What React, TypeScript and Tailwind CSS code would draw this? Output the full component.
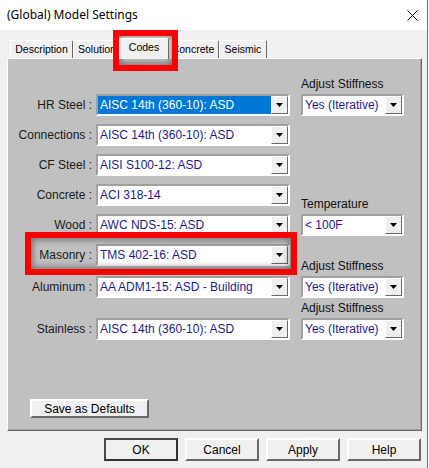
import React from "react";

function Arrow() {
  return (
    <svg width="7" height="4" viewBox="0 0 7 4">
      <polygon points="0,0 7,0 3.5,4" fill="#000" />
    </svg>
  );
}

function Combo({ text, w, selected }: { text: string; w: string; selected?: boolean }) {
  return (
    <div
      className={`flex h-[22px] ${w} border-2 border-t-[#a0a0a0] border-l-[#a0a0a0] border-b-white border-r-white bg-white`}
    >
      <div
        className={`flex-1 flex items-center pl-[2px] text-[12px] leading-none whitespace-nowrap overflow-hidden ${
          selected ? "bg-[#0078d7] text-white" : "text-[#1b1b8e]"
        }`}
      >
        {text}
      </div>
      <div className="w-[17px] h-full bg-[#f0f0f0] border border-t-white border-l-white border-r-[#696969] border-b-[#696969] flex items-center justify-center">
        <Arrow />
      </div>
    </div>
  );
}

function RightCell({ label, text }: { label: string; text: string }) {
  return (
    <div className="ml-[11px] flex flex-col">
      <div className="-mt-[17px] h-[15px] leading-[15px] mb-[2px] text-[12px] text-[#111] whitespace-nowrap">
        {label}
      </div>
      <Combo text={text} w="w-[103px]" />
    </div>
  );
}

function Row({
  label,
  text,
  selected,
  right,
  extra,
}: {
  label: string;
  text: string;
  selected?: boolean;
  right?: { label: string; text: string };
  extra?: string;
}) {
  return (
    <div className={`flex items-center h-[22px] ${extra ?? ""}`}>
      <div className="w-[84px] text-right text-[12px] leading-[14px] text-[#1a1a1a] whitespace-nowrap">{label}</div>
      <div className="ml-[4px]">
        <Combo text={text} w="w-[194px]" selected={selected} />
      </div>
      {right && <RightCell label={right.label} text={right.text} />}
    </div>
  );
}

function Tab({ label, w, active }: { label: string; w: string; active?: boolean }) {
  if (active) {
    return (
      <div
        className={`${w} -mx-[2px] h-[21px] translate-y-px relative z-10 bg-[#f0f0f0] border-t border-l border-white border-r border-r-[#696969] rounded-t-[2px] flex items-center justify-center pb-[3px] text-[10.5px] text-black`}
      >
        {label}
      </div>
    );
  }
  return (
    <div
      className={`${w} h-[18px] bg-[#f0f0f0] border-t border-l border-white border-r border-r-[#696969] rounded-t-[2px] flex items-center justify-center text-[10.5px] text-black whitespace-nowrap overflow-hidden`}
    >
      {label}
    </div>
  );
}

function Btn({ label, def }: { label: string; def?: boolean }) {
  return (
    <div
      className={`w-[74px] h-[23px] flex items-center justify-center text-[12px] text-black bg-[#f0f0f0] ${
        def
          ? "border-2 border-t-[#4a4a4a] border-l-[#4a4a4a] border-r-[#333] border-b-[#333]"
          : "border-2 border-t-white border-l-white border-r-[#696969] border-b-[#696969]"
      }`}
    >
      {label}
    </div>
  );
}

export default function App() {
  return (
    <div className="relative w-[428px] h-[468px] bg-[#f0f0f0] border-r border-[#1883d7] font-['Liberation_Sans',Arial,sans-serif] overflow-hidden">
      {/* title bar */}
      <div className="h-[30px] bg-white flex items-center justify-between pl-[7px] pr-[9px]">
        <span className="text-[12px] text-black font-['Noto_Sans',sans-serif]">(Global) Model Settings</span>
        <svg width="11" height="11" viewBox="0 0 11 11">
          <line x1="0.5" y1="0.5" x2="10.5" y2="10.5" stroke="#000" strokeWidth="1" />
          <line x1="10.5" y1="0.5" x2="0.5" y2="10.5" stroke="#000" strokeWidth="1" />
        </svg>
      </div>

      {/* tabs */}
      <div className="mt-[8px] h-[20px] flex items-end pl-[10px]">
        <Tab label="Description" w="w-[63px]" />
        <Tab label="Solution" w="w-[48px]" />
        <Tab label="Codes" w="w-[50px]" active />
        <Tab label="Concrete" w="w-[52px]" />
        <Tab label="Seismic" w="w-[48px]" />
      </div>

      {/* panel */}
      <div className="ml-[7px] w-[415px] h-[373px] border-t border-l border-white border-r border-b border-r-[#696969] border-b-[#696969]">
        <div className="h-full w-full bg-[#c0c0c0] border-r border-b border-[#a0a0a0] flex flex-col">
          <div className="pt-[35px] flex flex-col gap-[8px]">
            <Row
              label="HR Steel :"
              text="AISC 14th (360-10): ASD"
              selected
              right={{ label: "Adjust Stiffness", text: "Yes (Iterative)" }}
            />
            <Row label="Connections :" text="AISC 14th (360-10): ASD" />
            <Row label="CF Steel :" text="AISI S100-12: ASD" />
            <Row label="Concrete :" text="ACI 318-14" />
            <Row label="Wood :" text="AWC NDS-15: ASD" right={{ label: "Temperature", text: "< 100F" }} />
            <Row label="Masonry :" text="TMS 402-16: ASD" />
            <Row
              label="Aluminum :"
              text="AA ADM1-15: ASD - Building"
              extra="mt-[2px]"
              right={{ label: "Adjust Stiffness", text: "Yes (Iterative)" }}
            />
            <Row
              label="Stainless :"
              text="AISC 14th (360-10): ASD"
              extra="mt-[12px]"
              right={{ label: "Adjust Stiffness", text: "Yes (Iterative)" }}
            />
          </div>
          <div className="mt-auto mb-[11px] ml-[22px] w-[119px] h-[19px] flex items-center justify-center text-[12px] text-black bg-[#f0f0f0] border-2 border-t-white border-l-white border-r-[#696969] border-b-[#696969]">
            Save as Defaults
          </div>
        </div>
      </div>

      {/* bottom buttons */}
      <div className="mt-[7px] flex justify-end gap-[7px] pr-[6px]">
        <Btn label="OK" def />
        <Btn label="Cancel" />
        <Btn label="Apply" />
        <Btn label="Help" />
      </div>

      {/* red highlight boxes */}
      <div className="absolute left-[113px] top-[30px] w-[65px] h-[41px] border-[6px] border-[#f00] shadow-[inset_0_0_6px_2px_rgba(0,0,0,0.4)] pointer-events-none" />
      <div className="absolute left-[25px] top-[232px] w-[272px] h-[43px] border-[6px] border-[#f00] shadow-[inset_0_0_6px_2px_rgba(0,0,0,0.4)] pointer-events-none" />
    </div>
  );
}
